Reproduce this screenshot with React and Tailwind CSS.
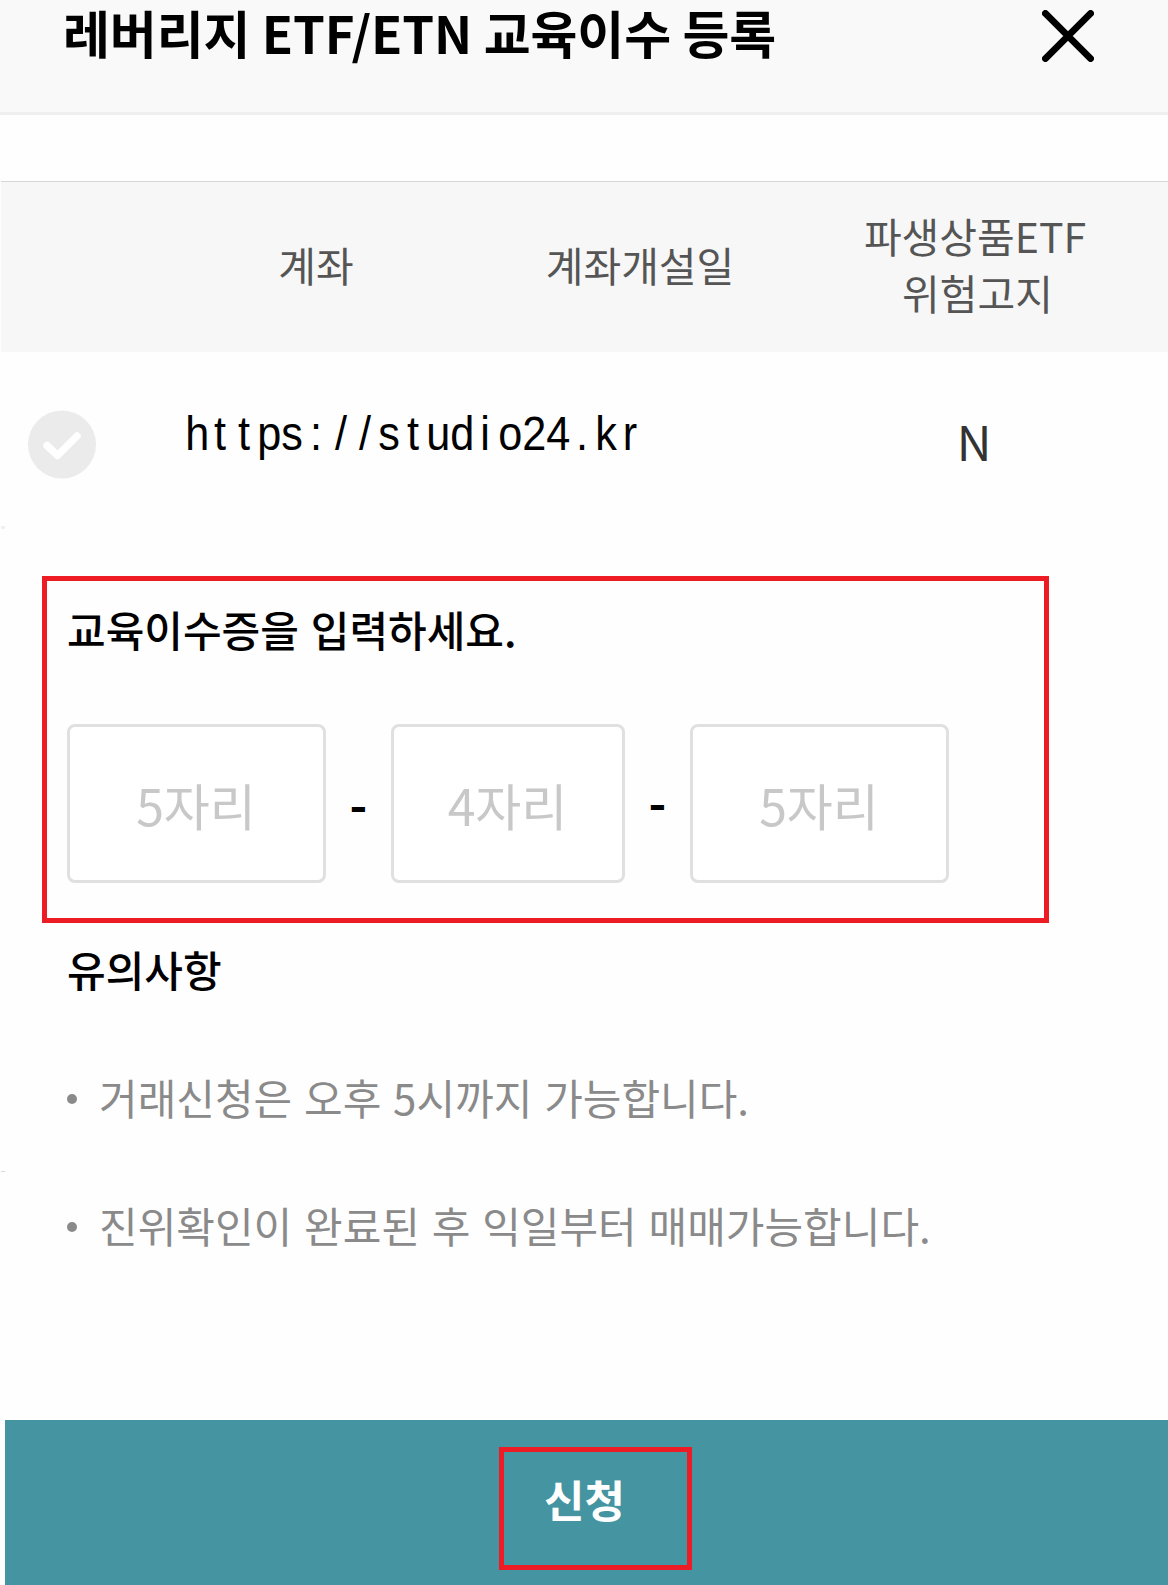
const NOTICES = [
  "거래신청은 오후 5시까지 가능합니다.",
  "진위확인이 완료된 후 익일부터 매매가능합니다.",
];

const ACCOUNT = "https://studio24.kr";

function CloseIcon() {
  return (
    <svg className="h-[52px] w-[52px]" viewBox="0 0 52 52" fill="none" stroke="#000" strokeWidth="6.8" strokeLinecap="round">
      <path d="M3.4 3.4 48.6 48.6M48.6 3.4 3.4 48.6" />
    </svg>
  );
}

function CheckBadge() {
  return (
    <svg className="h-[69px] w-[69px]" viewBox="0 0 69 69" fill="none">
      <circle cx="35" cy="34.5" r="34" fill="#ebebeb" />
      <path d="M20 35.5 30.5 45.5 50 26" stroke="#fff" strokeWidth="7.4" strokeLinecap="round" strokeLinejoin="round" />
    </svg>
  );
}

function CodeInput({ placeholder, className }) {
  return (
    <input
      placeholder={placeholder}
      className={`h-[159px] rounded-lg border-3 border-[#e0e0e0] bg-white pr-px text-center text-[50px] outline-none placeholder:text-[#c8c8c8] ${className}`}
    />
  );
}

export default function App() {
  return (
    <div className="flex h-[1585px] w-[1168px] flex-col overflow-hidden bg-[#fefefe] font-['Noto_Sans_CJK_KR',sans-serif] text-black">
      <header className="flex h-[115px] shrink-0 items-start justify-between border-b-3 border-[#efefef] bg-[#f9f9f9] pr-[74px] pl-[63px]">
        <h1 className="text-[51px] leading-[65px] font-bold tracking-[-0.1px] whitespace-nowrap">레버리지 ETF/ETN 교육이수 등록</h1>
        <button type="button" aria-label="닫기" className="mt-[10px]">
          <CloseIcon />
        </button>
      </header>

      <section className="mt-[66px] shrink-0">
        <div className="ml-px grid h-[171px] grid-cols-[153px_324px_324px_346px] items-center border-t border-[#d8d8d8] bg-[#f7f7f7] pb-[6px] text-center text-[41px] leading-[57px] text-[#555]">
          <span />
          <span>계좌</span>
          <span>계좌개설일</span>
          <span>
            파생상품ETF
            <span className="block pl-[5px]">위험고지</span>
          </span>
        </div>
        <div className="grid h-[174px] grid-cols-[184px_617px_346px]">
          <div className="pt-[58px] pl-[27px]">
            <CheckBadge />
          </div>
          <p className="pt-[50px] font-['Liberation_Sans',sans-serif] text-[48px] leading-[64px]">
            {ACCOUNT.split("").map((char, i) => (
              <span key={i} className="inline-block w-[24.1px] scale-x-90 text-center">
                {char}
              </span>
            ))}
          </p>
          <p className="pt-[55px] text-center text-[48px] leading-[66px] text-[#333]">N</p>
        </div>
        <div className="ml-px h-[3px] w-1 bg-[#f0f0f0]" />
      </section>

      <section className="mt-[47px] ml-[42px] h-[347px] w-[1007px] shrink-0 border-5 border-[#ed1c24] pl-5">
        <h2 className="pt-[17px] text-[42px] leading-[62px] font-medium [word-spacing:2.5px]">교육이수증을 입력하세요.</h2>
        <div className="mt-[64px] flex items-center">
          <CodeInput placeholder="5자리" className="w-[259px]" />
          <span className="w-[65px] pb-[3px] text-center text-[48px] leading-none font-bold">-</span>
          <CodeInput placeholder="4자리" className="w-[234px]" />
          <span className="w-[65px] pb-[7px] text-center text-[48px] leading-none font-bold">-</span>
          <CodeInput placeholder="5자리" className="w-[259px]" />
        </div>
      </section>

      <section className="mt-[15px] shrink-0 pl-[67px]">
        <h2 className="text-[42px] leading-[62px] font-medium">유의사항</h2>
        <ul className="mt-[66px] flex flex-col gap-[66px] text-[42px] leading-[62px] text-[#8a8a8a] [word-spacing:2.4px]">
          {NOTICES.map((notice) => (
            <li key={notice} className="flex items-center gap-[22px]">
              <span className="mt-[3px] h-[10px] w-[10px] rounded-full bg-[#8a8a8a]" />
              {notice}
            </li>
          ))}
        </ul>
        {/* clipped end of the divider between notices */}
        <div className="-mt-[85px] -ml-[66px] h-px w-1 bg-[#d8d8d8]" />
      </section>

      <footer className="mt-auto ml-[5px] flex h-[165px] shrink-0 bg-[#4494a1] pt-[27px] pl-[494px]">
        <button type="button" className="h-[123px] w-[193px] border-5 border-[#ed1c24] pr-[22px] pb-[19px] text-[44px] font-bold text-white">
          신청
        </button>
      </footer>
    </div>
  );
}
